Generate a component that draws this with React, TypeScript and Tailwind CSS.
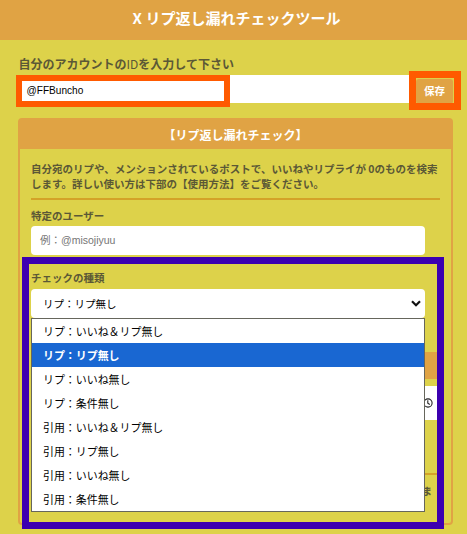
const options = [
  'リプ：いいね＆リプ無し',
  'リプ：リプ無し',
  'リプ：いいね無し',
  'リプ：条件無し',
  '引用：いいね＆リプ無し',
  '引用：リプ無し',
  '引用：いいね無し',
  '引用：条件無し',
];

function Menu() {
  return (
    <ul className="absolute left-0 top-full z-10 h-[194px] w-full border border-[#66665c] bg-white">
      {options.map((label, i) => (
        <li
          key={label}
          className={`flex h-6 items-center pl-[11px] text-[10.95px] ${
            i === 1 ? 'bg-[#1967d2] font-bold text-white' : 'text-black'
          }`}
        >
          {label}
        </li>
      ))}
    </ul>
  );
}

function CheckPanel() {
  return (
    <section className="ml-[18px] mt-[15px] h-[407px] w-[435px] rounded-[4px] border-2 border-[#e0a344]">
      <h2 className="-mx-px -mt-px flex h-[30px] items-center justify-center bg-[#e0a344] pt-px text-[12px] font-bold text-white">
        【リプ返し漏れチェック】
      </h2>
      <div className="px-[11px] pt-[12px] text-[10.5px]">
        <p className="whitespace-nowrap font-bold leading-[15px]">
          自分宛のリプや、メンションされているポストで、いいねやリプライが 0のものを検索
          <br />
          します。詳しい使い方は下部の【使用方法】をご覧ください。
        </p>
        <div className="mt-[7px] h-[2px] w-[409px] bg-[#d4a228]" />
        <label className="mt-[8px] block font-bold leading-[16px]">特定のユーザー</label>
        <div className="mt-[2px] flex h-[29px] w-[394px] items-center rounded-[4px] bg-white pl-[9px] pt-px font-['Liberation_Sans','Noto_Sans_CJK_JP',sans-serif] text-[#757575]">
          例：@misojiyuu
        </div>
        <label className="mt-[15px] block font-bold leading-[16px]">チェックの種類</label>
        <div className="relative mt-[3px] flex h-[29px] w-[394px] items-center justify-between rounded-[4px] bg-white pl-[12px] pr-[4px] text-black">
          <span>リプ：リプ無し</span>
          <svg width="10" height="7" viewBox="0 0 10 7" fill="none" stroke="#111" strokeWidth="2.2">
            <path d="M1 1.2 5 5.2 9 1.2" />
          </svg>
          <Menu />
        </div>
        <div className="mt-[34px] h-[27px] w-[409px] bg-[#e0a344]" />
        <div className="mt-[7px] flex h-[34px] w-[409px] items-center justify-end bg-white pr-[7px]">
          <svg width="10" height="10" viewBox="0 0 10 10" fill="none" stroke="#222" strokeWidth="1.1">
            <circle cx="5" cy="5" r="4.1" />
            <path d="M4.8 2.3v3l2 1.2" />
          </svg>
        </div>
        <div className="mt-[53px] h-[2px] w-[409px] bg-[#d4a228]" />
        <p className="mt-[8px] w-[401px] text-right font-bold leading-[15px]">ま</p>
      </div>
    </section>
  );
}

export default function App() {
  return (
    <main className="relative h-[534px] w-[467px] overflow-hidden bg-[#ddd24a] font-['Noto_Sans_CJK_JP',sans-serif] text-[#5b5836]">
      <header className="flex h-[40px] items-center justify-center bg-[#e0a344] pb-[3px] pl-[6px] text-[15px] font-bold text-white">
        X リプ返し漏れチェックツール
      </header>
      <div className="pl-[18.5px] pt-[15px]">
        <label className="block text-[12px] font-bold leading-[18px]">
          自分のアカウントの<span className="font-normal">ID</span>を入力して下さい
        </label>
        <div className="mt-[2px] flex h-[28px]">
          <div className="flex w-[393px] items-center bg-white pl-[8px] pt-[3px] font-['Liberation_Sans',sans-serif] text-[10.1px] text-black">
            @FFBuncho
          </div>
          <button className="ml-[4.5px] mt-[4px] flex h-[25px] w-[37px] items-center justify-center rounded-[3px] bg-[#e0a344] pb-[2px] text-[10.5px] font-bold text-white">
            保存
          </button>
        </div>
      </div>
      <CheckPanel />
      <div className="absolute left-[16px] top-[75px] z-20 h-[32px] w-[214px] border-[6px] border-[#ff5a00]" />
      <div className="absolute left-[409px] top-[71px] z-20 h-[39px] w-[52px] border-[7px] border-[#ff5a00]" />
      <div className="absolute left-[22px] top-[257px] z-20 h-[272px] w-[422px] border-[7px] border-[#3c00b0]" />
    </main>
  );
}
